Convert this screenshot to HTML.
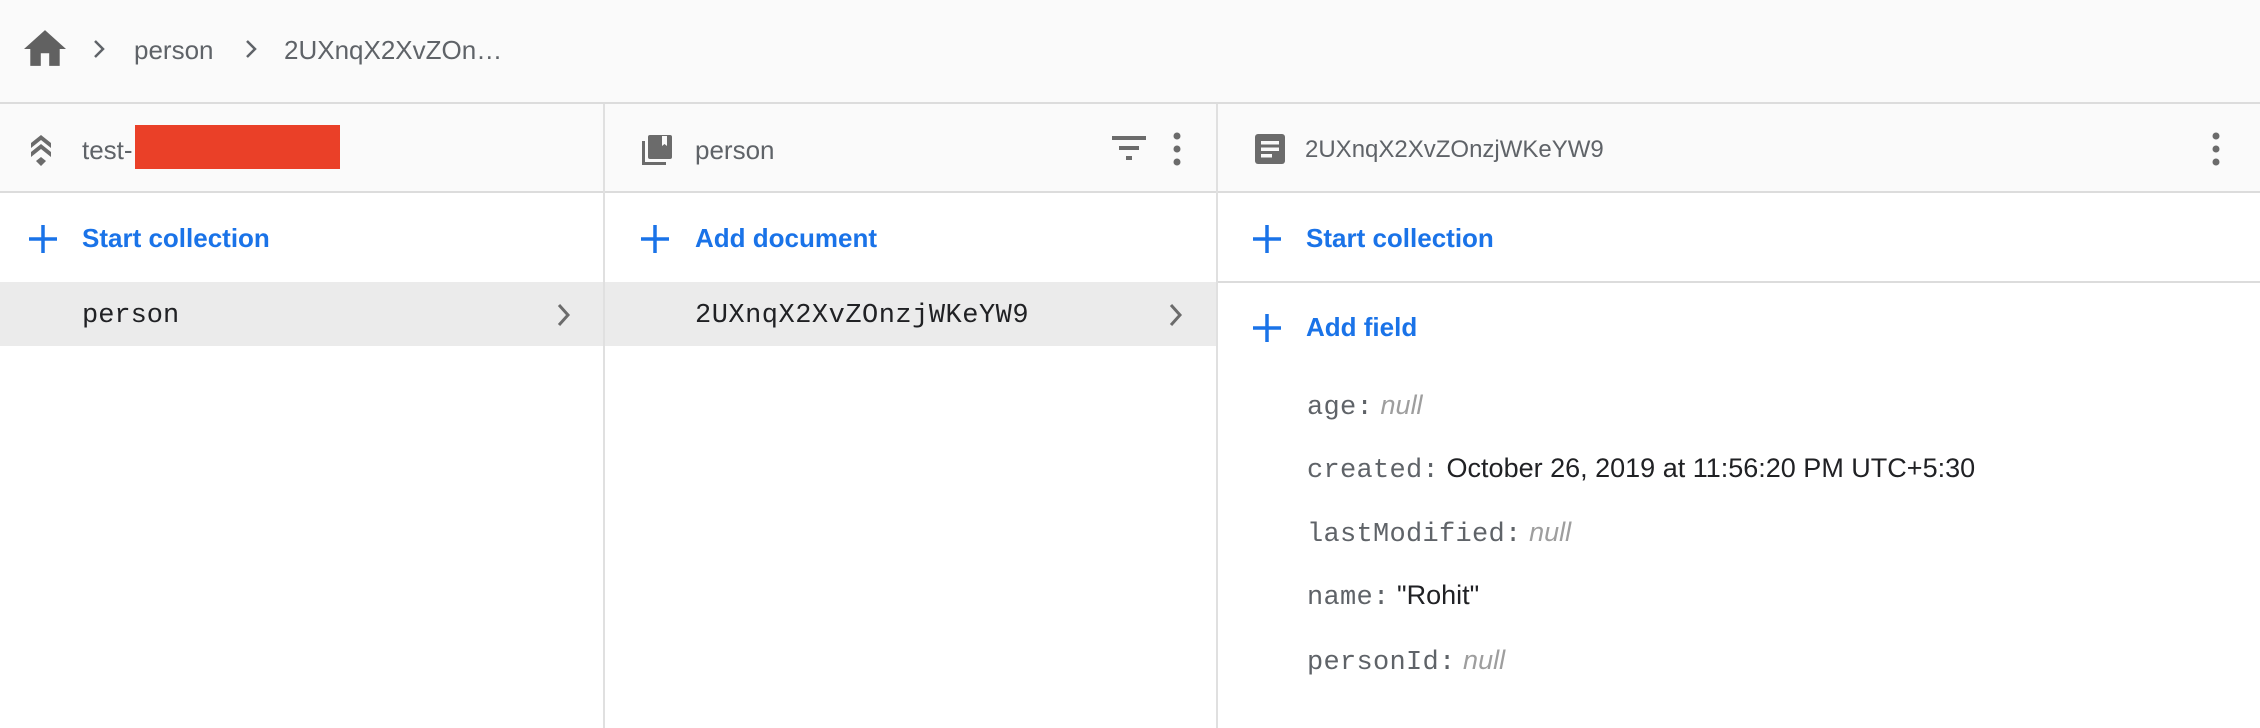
<!DOCTYPE html>
<html><head><meta charset="utf-8"><style>
*{margin:0;padding:0;box-sizing:border-box}
body{width:2260px;height:728px;background:#fff;position:relative;overflow:hidden;font-family:"Liberation Sans",sans-serif}
.a{position:absolute}
.t{position:absolute;white-space:nowrap;line-height:1}
.mono{font-family:"Liberation Mono",monospace}
.blue{color:#1a73e8;font-size:26px;font-weight:bold}
.g{color:#5f6368}
</style></head><body>
<div class="a" style="left:0;top:0;width:2260px;height:104px;background:#fafafa;border-bottom:2px solid #dcdcdc"></div>
<div class="a" style="left:0;top:104px;width:2260px;height:89px;background:#fafafa;border-bottom:2px solid #dcdcdc"></div>
<div class="a" style="left:0;top:282px;width:1216px;height:64px;background:#ebebeb"></div>
<div class="a" style="left:1216px;top:281px;width:1044px;height:2px;background:#dcdcdc"></div>
<div class="a" style="left:603px;top:104px;width:2px;height:624px;background:#e0e0e0"></div>
<div class="a" style="left:1216px;top:104px;width:2px;height:624px;background:#e0e0e0"></div>

<svg class="a" style="left:24px;top:30px" width="42" height="36" viewBox="2 3 20 17"><path d="M10 20v-6h4v6h5v-8h3L12 3 2 12h3v8z" fill="#616161"/></svg>
<svg class="a" style="left:92px;top:38px" width="14" height="22" viewBox="0 0 14 22"><path d="M3 3l8 8-8 8" stroke="#5f6368" stroke-width="2.5" fill="none"/></svg>
<div class="t g" style="left:134px;top:37px;font-size:26px">person</div>
<svg class="a" style="left:244px;top:38px" width="14" height="22" viewBox="0 0 14 22"><path d="M3 3l8 8-8 8" stroke="#5f6368" stroke-width="2.5" fill="none"/></svg>
<div class="t g" style="left:284px;top:37px;font-size:26px">2UXnqX2XvZOn…</div>

<svg class="a" style="left:28px;top:133px" width="26" height="34" viewBox="0 0 26 34"><path d="M3 10L13 2l10 8v5L13 7 3 15zM3 19l10-8 10 8v5l-10-8-10 8zM8 28l5-4 5 4-5 5z" fill="#6b6b6b"/></svg>
<div class="t g" style="left:82px;top:137px;font-size:26px">test-</div>
<div class="a" style="left:135px;top:125px;width:205px;height:44px;background:#ea4028"></div>
<svg class="a" style="left:640px;top:133px" width="34" height="34" viewBox="0 0 34 34"><path d="M2 8v24h24v-3H5V8z" fill="#6b6b6b"/><rect x="8" y="2" width="24" height="24" rx="2" fill="#6b6b6b"/><path d="M22 3h5v10l-2.5-2-2.5 2z" fill="#fafafa"/></svg>
<div class="t g" style="left:695px;top:137px;font-size:26px">person</div>
<svg class="a" style="left:1110px;top:133px" width="38" height="30" viewBox="0 0 38 30"><rect x="2" y="3" width="34" height="4" fill="#6b6b6b"/><rect x="9" y="13" width="20" height="4" fill="#6b6b6b"/><rect x="16" y="23" width="6" height="4" fill="#6b6b6b"/></svg>
<svg class="a" style="left:1169px;top:131px" width="16" height="36" viewBox="0 0 16 36"><circle cx="8" cy="5" r="3.5" fill="#6b6b6b"/><circle cx="8" cy="18" r="3.5" fill="#6b6b6b"/><circle cx="8" cy="31" r="3.5" fill="#6b6b6b"/></svg>
<svg class="a" style="left:1255px;top:134px" width="30" height="30" viewBox="0 0 30 30"><rect x="0" y="0" width="30" height="30" rx="3" fill="#6b6b6b"/><rect x="6" y="7" width="18" height="3.5" fill="#fafafa"/><rect x="6" y="13.5" width="18" height="3.5" fill="#fafafa"/><rect x="6" y="20" width="11" height="3.5" fill="#fafafa"/></svg>
<div class="t g" style="left:1305px;top:138px;font-size:24px">2UXnqX2XvZOnzjWKeYW9</div>
<svg class="a" style="left:2208px;top:131px" width="16" height="36" viewBox="0 0 16 36"><circle cx="8" cy="5" r="3.5" fill="#6b6b6b"/><circle cx="8" cy="18" r="3.5" fill="#6b6b6b"/><circle cx="8" cy="31" r="3.5" fill="#6b6b6b"/></svg>

<svg class="a" style="left:28px;top:224px" width="30" height="30" viewBox="0 0 30 30"><path d="M15 1v28M1 15h28" stroke="#1a73e8" stroke-width="3.5"/></svg>
<div class="t blue" style="left:82px;top:225px">Start collection</div>
<svg class="a" style="left:640px;top:224px" width="30" height="30" viewBox="0 0 30 30"><path d="M15 1v28M1 15h28" stroke="#1a73e8" stroke-width="3.5"/></svg>
<div class="t blue" style="left:695px;top:225px">Add document</div>
<svg class="a" style="left:1252px;top:224px" width="30" height="30" viewBox="0 0 30 30"><path d="M15 1v28M1 15h28" stroke="#1a73e8" stroke-width="3.5"/></svg>
<div class="t blue" style="left:1306px;top:225px">Start collection</div>
<svg class="a" style="left:1252px;top:313px" width="30" height="30" viewBox="0 0 30 30"><path d="M15 1v28M1 15h28" stroke="#1a73e8" stroke-width="3.5"/></svg>
<div class="t blue" style="left:1306px;top:314px">Add field</div>

<div class="t mono" style="left:82px;top:303px;font-size:27px;color:#202124">person</div>
<svg class="a" style="left:555px;top:302px" width="18" height="26" viewBox="0 0 18 26"><path d="M4 3l9 10-9 10" stroke="#6b6b6b" stroke-width="3" fill="none"/></svg>
<div class="t mono" style="left:695px;top:303px;font-size:27px;color:#202124;letter-spacing:0.5px">2UXnqX2XvZOnzjWKeYW9</div>
<svg class="a" style="left:1167px;top:302px" width="18" height="26" viewBox="0 0 18 26"><path d="M4 3l9 10-9 10" stroke="#6b6b6b" stroke-width="3" fill="none"/></svg>

<div class="t" style="left:1307px;top:392px;font-size:27px"><span class="mono g" style="font-size:27px;letter-spacing:0.3px">age:</span>&nbsp;<i style="color:#9e9e9e">null</i></div>
<div class="t" style="left:1307px;top:455px;font-size:27px"><span class="mono g" style="font-size:27px;letter-spacing:0.3px">created:</span>&nbsp;<span style="color:#202124">October 26, 2019 at 11:56:20 PM UTC+5:30</span></div>
<div class="t" style="left:1307px;top:519px;font-size:27px"><span class="mono g" style="font-size:27px;letter-spacing:0.3px">lastModified:</span>&nbsp;<i style="color:#9e9e9e">null</i></div>
<div class="t" style="left:1307px;top:582px;font-size:27px"><span class="mono g" style="font-size:27px;letter-spacing:0.3px">name:</span>&nbsp;<span style="color:#202124">"Rohit"</span></div>
<div class="t" style="left:1307px;top:647px;font-size:27px"><span class="mono g" style="font-size:27px;letter-spacing:0.3px">personId:</span>&nbsp;<i style="color:#9e9e9e">null</i></div>
</body></html>
